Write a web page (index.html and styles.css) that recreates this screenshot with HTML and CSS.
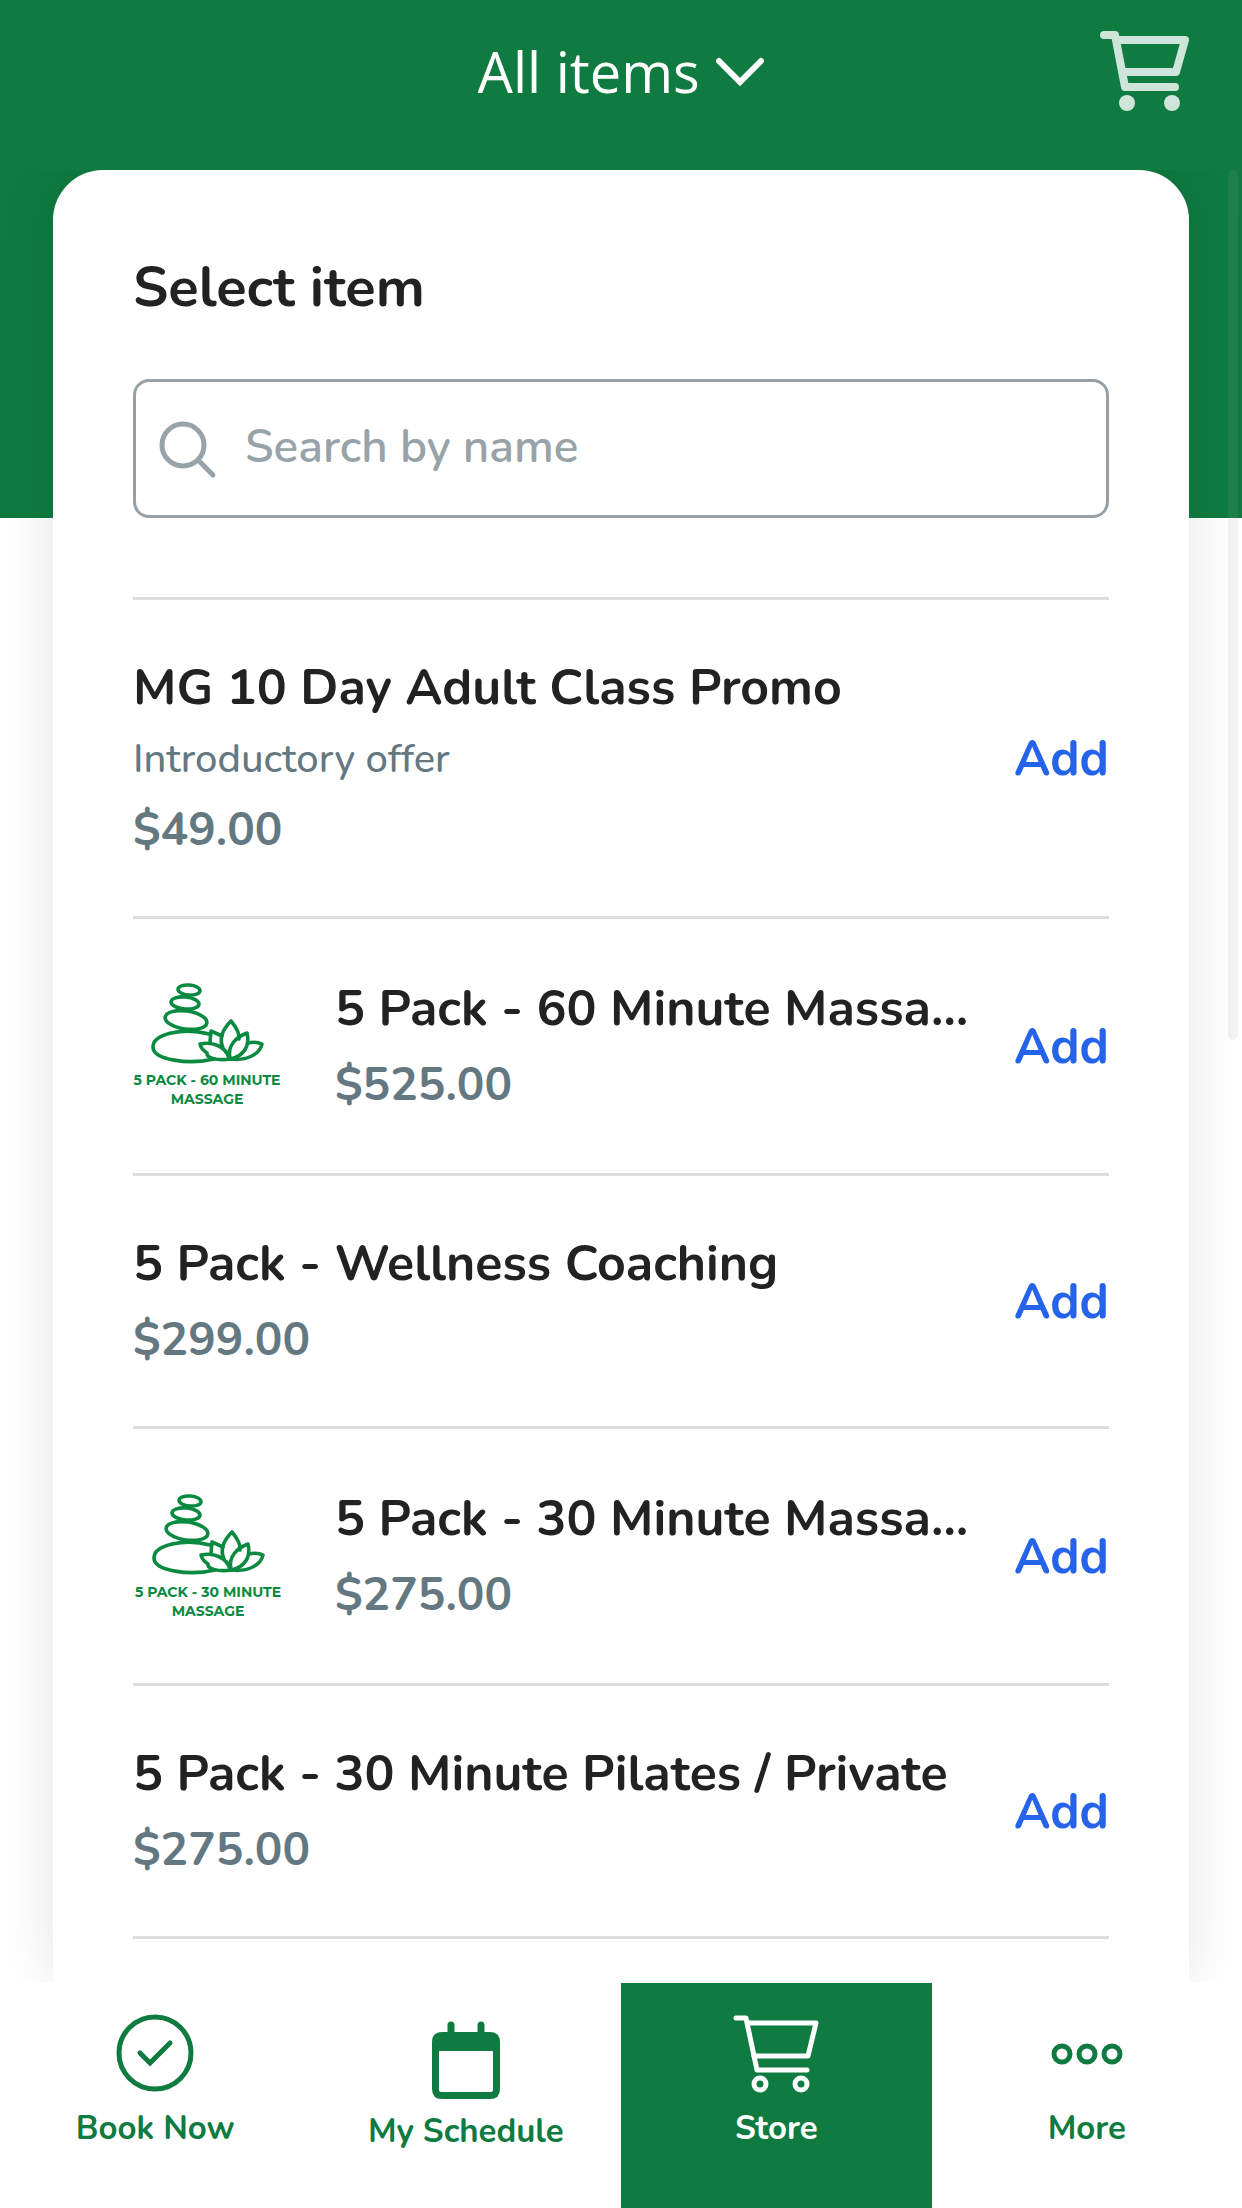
FILE: index.html
```html
<!DOCTYPE html>
<html lang="en">
<head>
  <meta charset="UTF-8" />
  <meta name="viewport" content="width=device-width, initial-scale=1.0" />
  <title>Store</title>
  <link rel="stylesheet" href="styles.css">
</head>
<body>
  <!-- shared drawing for the massage packs -->
  <svg class="defs" aria-hidden="true">
    <symbol id="stones" viewBox="0 0 150 158">
      <g fill="none" stroke="#0a8a40" stroke-width="3.6" stroke-linejoin="round" stroke-linecap="round">
        <ellipse cx="56" cy="23" rx="11" ry="5" transform="rotate(4 56 23)" />
        <ellipse cx="52" cy="36" rx="14" ry="6" transform="rotate(5 52 36)" />
        <ellipse cx="53" cy="53" rx="21" ry="9" transform="rotate(8 53 53)" />
        <path d="M76 67C50 60 20 67 20 80C20 93 56 98 81 92" />
        <path d="M89 69L78 64L77 75" />
        <path d="M90 81C85 70 91 61 98 54C103 60 107 66 106 72" />
        <path d="M97 91C94 79 103 70 114 66C117 78 112 88 98 92" />
        <path d="M115 76Q123 74 129 77C127 87 114 94 98 92" />
        <path d="M98 92C84 94 73 91 74 86Q68 82 67 77C80 74 93 80 96 91" />
      </g>
    </symbol>
  </svg>

  <header class="topbar">
    <label class="filter">
      <select name="category" aria-label="Category">
        <option>All items</option>
      </select>
      <svg width="50" height="30" viewBox="0 0 50 30" aria-hidden="true">
        <path d="M4 5L25 26L46 5" fill="none" stroke="#fff" stroke-width="6" stroke-linecap="round" />
      </svg>
    </label>
    <button class="cart" type="button" aria-label="Cart">
      <svg width="90" height="82" viewBox="0 0 90 82">
        <g fill="none" stroke="#cfe5d9" stroke-width="8" stroke-linejoin="round" stroke-linecap="round">
          <path d="M5 5H16L26 57H76" />
          <path d="M18 10H86L77 42H24" />
        </g>
        <circle cx="28" cy="73" r="8" fill="#cfe5d9" />
        <circle cx="73" cy="73" r="8" fill="#cfe5d9" />
      </svg>
    </button>
  </header>

  <main>
    <section class="card">
      <h1>Select item</h1>
      <label class="search">
        <svg width="60" height="60" viewBox="0 0 60 60" aria-hidden="true">
          <g fill="none" stroke="#97a3a8" stroke-width="5" stroke-linecap="round">
            <circle cx="25" cy="26" r="21" />
            <path d="M41 42L55 56" />
          </g>
        </svg>
        <input type="search" name="name" placeholder="Search by name" aria-label="Search by name" />
      </label>

      <ul class="items">
        <li class="item">
          <div class="info">
            <h2>MG 10 Day Adult Class Promo</h2>
            <p class="note">Introductory offer</p>
            <p class="price">$49.00</p>
          </div>
          <button class="add" type="button">Add</button>
        </li>
        <li class="item">
          <svg class="thumb" viewBox="0 0 150 158">
            <use href="#stones" />
            <text x="74" y="118">5 PACK - 60 MINUTE</text>
            <text x="74" y="137">MASSAGE</text>
          </svg>
          <div class="info">
            <h2>5 Pack - 60 Minute Massage</h2>
            <p class="price">$525.00</p>
          </div>
          <button class="add" type="button">Add</button>
        </li>
        <li class="item">
          <div class="info">
            <h2>5 Pack - Wellness Coaching</h2>
            <p class="price">$299.00</p>
          </div>
          <button class="add" type="button">Add</button>
        </li>
        <li class="item">
          <svg class="thumb" viewBox="0 0 150 158">
            <use href="#stones" x="1" y="1" />
            <text x="75" y="120">5 PACK - 30 MINUTE</text>
            <text x="75" y="139">MASSAGE</text>
          </svg>
          <div class="info">
            <h2>5 Pack - 30 Minute Massage</h2>
            <p class="price">$275.00</p>
          </div>
          <button class="add" type="button">Add</button>
        </li>
        <li class="item">
          <div class="info">
            <h2>5 Pack - 30 Minute Pilates / Private</h2>
            <p class="price">$275.00</p>
          </div>
          <button class="add" type="button">Add</button>
        </li>
      </ul>
    </section>
    <div class="scroll-thumb"></div>
  </main>

  <nav class="tabs">
    <a href="#book">
      <svg width="78" height="78" viewBox="0 0 78 78" aria-hidden="true">
        <g fill="none" stroke="#0f7b40" stroke-linecap="round">
          <circle cx="39" cy="38" r="36" stroke-width="5" />
          <path d="M24 38L34 48L54 28" stroke-width="5" />
        </g>
      </svg>
      Book Now
    </a>
    <a href="#schedule">
      <svg width="68" height="81" viewBox="0 0 68 81" aria-hidden="true">
        <path d="M19 10V19M49 10V19" stroke="#0f7b40" stroke-width="7" stroke-linecap="round" />
        <path fill="#0f7b40" fill-rule="evenodd" d="M10 17H58Q68 17 68 27V74Q68 84 58 84H10Q0 84 0 74V27Q0 17 10 17ZM7 36V75Q7 77 9 77H59Q61 77 61 75V36Z" />
      </svg>
      My Schedule
    </a>
    <a class="active" href="#store">
      <svg width="86" height="78" viewBox="0 0 86 78" aria-hidden="true">
        <g fill="none" stroke="#fff" stroke-width="5" stroke-linejoin="round" stroke-linecap="round">
          <path d="M3 3H13L24 55H74" />
          <path d="M15 8H83L75 41H21" />
          <circle cx="27" cy="69" r="6" />
          <circle cx="68" cy="69" r="6" />
        </g>
      </svg>
      Store
    </a>
    <a href="#more">
      <svg width="72" height="78" viewBox="0 0 72 78" aria-hidden="true">
        <g fill="none" stroke="#0f7b40" stroke-width="5">
          <circle cx="11" cy="39" r="8" />
          <circle cx="36" cy="39" r="8" />
          <circle cx="61" cy="39" r="8" />
        </g>
      </svg>
      More
    </a>
  </nav>
</body>
</html>
```
FILE: styles.css
```css
* {
  box-sizing: border-box;
}
body {
  margin: 0;
  height: 100vh;
  display: flex;
  flex-direction: column;
  background: #fff;
  color: #222;
  font-family: Nunito, 'Open Sans', sans-serif;
}
h1, h2, p, ul {
  margin: 0;
  padding: 0;
}
button {
  padding: 0;
  border: none;
  background: none;
  font-family: inherit;
  cursor: pointer;
}
svg {
  display: block;
  flex-shrink: 0;
  overflow: visible;
}
.defs {
  position: absolute;
  width: 0;
  height: 0;
}

.topbar {
  display: grid;
  grid-template-columns: 1fr auto 1fr;
  align-items: center;
  height: 170px;
  padding: 0 53px 28px;
  background: #0f7b40;
}
.filter {
  grid-column: 2;
  display: flex;
  align-items: center;
  gap: 14px;
}
.filter select {
  appearance: none;
  padding: 0;
  border: none;
  background: none;
  color: #fff;
  font-family: 'Open Sans', sans-serif;
  font-size: 56px;
}
.cart {
  justify-self: end;
}

main {
  position: relative;
  flex: 1;
  min-height: 0;
  overflow: hidden;
  background: linear-gradient(#0f7b40 348px, #fff 348px);
}
.card {
  min-height: 100%;
  margin: 0 53px;
  padding: 80px 80px 46px;
  background: #fff;
  border-radius: 50px 50px 0 0;
  box-shadow: 0 0 60px rgba(0, 0, 0, 0.1);
}
.card h1 {
  font-size: 56px;
  font-weight: 700;
  line-height: 76px;
}
.search {
  display: flex;
  align-items: center;
  gap: 27px;
  height: 139px;
  margin: 53px 0 79px;
  padding: 0 22px;
  border: 3px solid #97a0a4;
  border-radius: 16px;
}
.search input {
  flex: 1;
  min-width: 0;
  padding: 0 0 4px;
  border: none;
  outline: none;
  background: none;
  color: #222;
  font-family: inherit;
  font-size: 46px;
  font-weight: 600;
}
.search input::placeholder {
  color: #97a3a8;
}

.items {
  list-style: none;
  border-top: 3px solid #ddd;
}
.item {
  display: flex;
  align-items: center;
  padding: 48px 0;
  border-bottom: 3px solid #ddd;
}
.thumb {
  width: 150px;
  height: 158px;
  margin-right: 52px;
}
.thumb text {
  fill: #0a8a40;
  font-family: Montserrat, Inter, sans-serif;
  font-size: 14px;
  font-weight: 700;
  text-anchor: middle;
}
.info {
  flex: 1;
  min-width: 0;
  padding-top: 2px;
}
.info h2 {
  overflow: hidden;
  font-size: 50px;
  font-weight: 700;
  line-height: 76px;
  text-overflow: ellipsis;
  white-space: nowrap;
}
.note {
  color: #647882;
  font-size: 40px;
  font-weight: 500;
  line-height: 66px;
}
.price {
  color: #647882;
  font-size: 46px;
  font-weight: 700;
  line-height: 76px;
}
.add {
  margin-left: 34px;
  color: #2563eb;
  font-size: 49px;
  font-weight: 700;
}

/* position indicator over the right edge */
.scroll-thumb {
  position: absolute;
  top: 0;
  right: 4px;
  width: 10px;
  height: 870px;
  border-radius: 5px;
  background: rgba(160, 160, 160, 0.12);
}

.tabs {
  display: grid;
  grid-template-columns: repeat(4, 1fr);
  height: 225px;
  background: #fff;
}
.tabs a {
  display: flex;
  flex-direction: column;
  align-items: center;
  gap: 13px;
  padding-top: 32px;
  color: #0f7b40;
  font-size: 33px;
  font-weight: 700;
  line-height: 46px;
  text-decoration: none;
}
.tabs .active {
  background: #0f7b40;
  color: #fff;
}
```
